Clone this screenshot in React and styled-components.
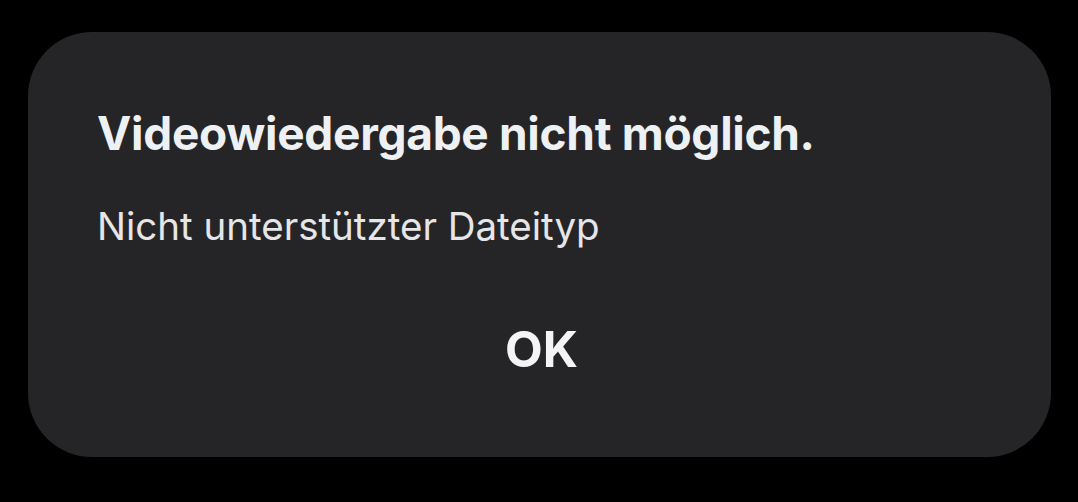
import styled, { createGlobalStyle } from "styled-components";

const GlobalStyle = createGlobalStyle`
    html, body {
        margin: 0;
        padding: 0;
        background: #000;
    }
    body {
        font-family: Inter, "Noto Sans", sans-serif;
    }
`;

const App = () => {
    return <>
        <GlobalStyle/>
        <Screen>
            <Dialog role="alertdialog">
                <Title>Videowiedergabe nicht möglich.</Title>
                <Message>Nicht unterstützter Dateityp</Message>
                <Actions>
                    <Button>OK</Button>
                </Actions>
            </Dialog>
        </Screen>
    </>;
}

export default App;

const Screen = styled.div`
    width: 1078px;
    height: 502px;
    padding: 32px 27px 45px 28px;
    box-sizing: border-box;
    background: #000;
`

const Dialog = styled.div`
    height: 100%;
    box-sizing: border-box;
    background: #252527;
    border-radius: 64px;
    padding: 78px 69px 0 69px;
    display: flex;
    flex-direction: column;
`

const Title = styled.h1`
    margin: 0;
    font-size: 46px;
    font-weight: 700;
    line-height: 1;
    color: #eef1f4;
    letter-spacing: -0.3px;
`

const Message = styled.p`
    margin: 51px 0 0;
    font-size: 38.5px;
    font-weight: 400;
    line-height: 1;
    color: #e6e6e8;
`

const Actions = styled.div`
    display: flex;
    justify-content: center;
    margin-top: 79px;
`

const Button = styled.button`
    background: none;
    border: none;
    padding: 0 0 0 4px;
    font-family: inherit;
    font-size: 49px;
    font-weight: 700;
    line-height: 1;
    color: #f4f4f6;
    cursor: pointer;
`
